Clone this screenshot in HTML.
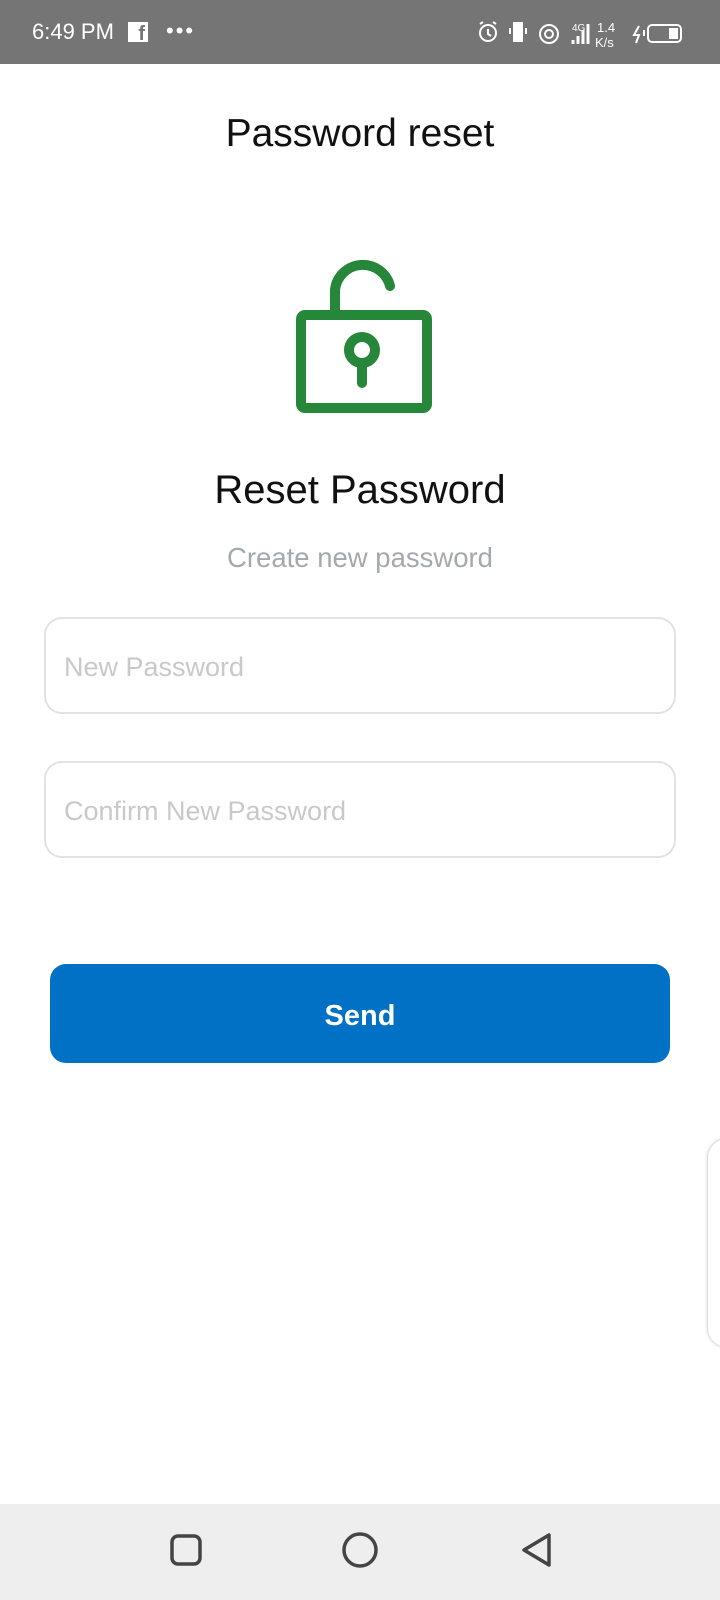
<!DOCTYPE html>
<html><head><meta charset="utf-8"><style>
*{margin:0;padding:0;box-sizing:border-box}
body{width:720px;height:1600px;background:#fff;font-family:"Liberation Sans",sans-serif;position:relative;overflow:hidden}
.sb{position:absolute;left:0;top:0;width:720px;height:64px;background:#757575;color:#fff}
.abs{position:absolute}
.inp{position:absolute;left:44px;width:632px;height:97px;border:2px solid #e2e2e2;border-radius:18px;color:#c9c9c9;font-size:27px;padding-left:18px;line-height:96px}
.nav{position:absolute;left:0;top:1504px;width:720px;height:96px;background:#eeeeee}
</style></head><body>
<div class="sb">
<div class="abs" style="left:32px;top:19px;font-size:22px;">6:49 PM</div>
<div class="abs" style="left:128px;top:22px;width:20px;height:20px;background:#fff;color:#757575;font-weight:bold;font-size:20px;line-height:24px;text-align:right;padding-right:3px">f</div>
<div class="abs" style="left:166px;top:18px;font-size:22px;letter-spacing:2px">•••</div>
<svg class="abs" style="left:476px;top:20px" width="220" height="28" viewBox="0 0 220 28" fill="none" stroke="#fff" stroke-width="2">
<circle cx="12" cy="13" r="8"/><path d="M12 9v5l3 2M4 4l3-2M20 4l-3-2"/>
<rect x="38" y="3" width="8" height="18" fill="#fff"/><path d="M34 8v6M50 8v6"/>
<circle cx="73" cy="14" r="9"/><circle cx="73" cy="14" r="4"/>
<path d="M97 20v4M102 16v8M107 10v14M112 4v20" stroke-width="3"/>
<text x="96" y="11" fill="#fff" stroke="none" font-size="10" font-family="Liberation Sans">4G</text>
<text x="121" y="12" fill="#fff" stroke="none" font-size="13" font-family="Liberation Sans">1.4</text>
<text x="119" y="27" fill="#fff" stroke="none" font-size="13" font-family="Liberation Sans">K/s</text>
<path d="M163 6l-5 9h5l-3 8" /><path d="M168 10v6"/>
<rect x="172" y="5" width="33" height="17" rx="4"/><rect x="193" y="8" width="9" height="11" fill="#fff" stroke="none"/>
</svg>
</div>
<div class="abs" style="left:0;width:720px;top:112px;text-align:center;font-size:39px;color:#111">Password reset</div>
<svg class="abs" style="left:260px;top:240px" width="200" height="180" viewBox="0 0 200 180">
<g fill="none" stroke="#26863a" stroke-width="10" stroke-linecap="round" stroke-linejoin="round">
<rect x="41" y="75" width="126" height="93" rx="4"/>
<path d="M75 73V50a28 28 0 0 1 55 -4"/>
<circle cx="102" cy="110" r="13"/><path d="M102 123v20"/>
</g></svg>
<div class="abs" style="left:0;width:720px;top:468px;text-align:center;font-size:40px;color:#111">Reset Password</div>
<div class="abs" style="left:0;width:720px;top:542px;text-align:center;font-size:27.5px;color:#a3a9ae">Create new password</div>
<div class="inp" style="top:617px">New Password</div>
<div class="inp" style="top:761px">Confirm New Password</div>
<div class="abs" style="left:50px;top:964px;width:620px;height:99px;background:#0071c5;border-radius:16px;color:#fff;font-weight:bold;font-size:29px;text-align:center;line-height:104px">Send</div>
<div class="abs" style="left:707px;top:1138px;width:40px;height:210px;border:1px solid #ddd;border-radius:22px;box-shadow:0 0 3px rgba(0,0,0,.15)"></div>
<div class="nav">
<svg class="abs" style="left:0;top:0" width="720" height="96">
<g fill="none" stroke="#444" stroke-width="3.5" stroke-linejoin="round">
<rect x="172" y="32" width="28" height="28" rx="6"/>
<circle cx="360" cy="46" r="16"/>
<path d="M549 31v30l-25-15z"/>
</g></svg>
</div>
</body></html>
